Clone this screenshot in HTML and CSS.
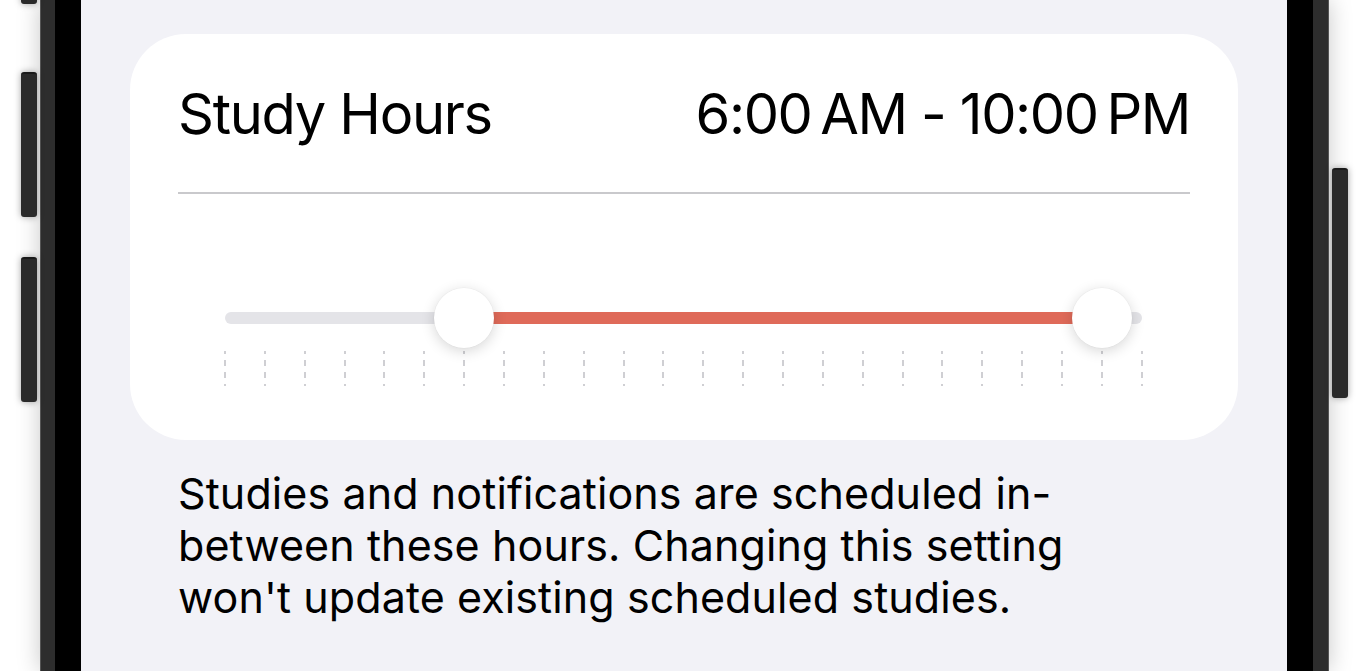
FILE: index.html
```html
<!DOCTYPE html>
<html lang="en">
<head>
<meta charset="utf-8">
<title>Study Hours</title>
<link rel="stylesheet" href="styles.css">
</head>
<body>
<div class="device">
  <span class="side-btn btn-l1"></span>
  <span class="side-btn btn-l2"></span>
  <span class="side-btn btn-l3"></span>
  <span class="side-btn btn-r1"></span>
  <div class="bezel">
    <main class="screen">
      <section class="card">
        <div class="card-head">
          <span class="title">Study Hours</span>
          <span class="range">6:00&#8239;AM - 10:00&#8239;PM</span>
        </div>
        <div class="divider"></div>
        <div class="slider">
          <div class="track">
            <div class="track-fill" style="left: 26.087%; width: 69.565%;"></div>
            <div class="thumb" style="left: 26.087%;"></div>
            <div class="thumb" style="left: 95.652%;"></div>
          </div>
          <div class="ticks">
            <i></i><i></i><i></i><i></i><i></i><i></i><i></i><i></i>
            <i></i><i></i><i></i><i></i><i></i><i></i><i></i><i></i>
            <i></i><i></i><i></i><i></i><i></i><i></i><i></i><i></i>
          </div>
        </div>
      </section>
      <p class="footnote">Studies and notifications are scheduled in-<br>between these hours. Changing this setting<br>won't update existing scheduled studies.</p>
    </main>
  </div>
</div>
</body>
</html>
```

FILE: styles.css
```css
* { box-sizing: border-box; }

html, body {
  margin: 0;
  height: 671px;
  overflow: hidden;
  background: #ffffff;
  font-family: Inter, "Noto Sans", "Liberation Sans", sans-serif;
  color: #000;
}

.device {
  position: relative;
  margin-left: 40px;
  width: 1289px;
  height: 671px;
  background: #2d2d2d;
  padding: 0 15px 0 14px;
  box-shadow: 0 0 22px rgba(0, 0, 0, 0.22);
  border-left: 1px solid #555;
  border-right: 1px solid #555;
}

.side-btn {
  position: absolute;
  width: 16px;
  background: #2a2a2a;
  border-radius: 3px;
  box-shadow: 0 0 7px rgba(0, 0, 0, 0.35);
  border-top: 2px solid #1a1a1a;
}
.btn-l1 { left: -20px; top: -40px; height: 44px; }
.btn-l2 { left: -20px; top: 72px; height: 145px; }
.btn-l3 { left: -20px; top: 257px; height: 145px; }
.btn-r1 { left: 1291px; top: 168px; height: 230px; }

.bezel {
  height: 100%;
  background: #000;
  padding: 0 26px 0 26px;
}

.screen {
  height: 100%;
  background: #f2f2f7;
  padding: 34px 49px 0 49px;
}

.card {
  background: #fff;
  border-radius: 56px;
  padding: 46px 48px 54px 48px;
}

.card-head {
  display: flex;
  justify-content: space-between;
  align-items: baseline;
  height: 68px;
  line-height: 68px;
  font-size: 56px;
}

.title {
  letter-spacing: -1.3px;
}

.range {
  letter-spacing: -1.4px;
}

.divider {
  margin-top: 44px;
  height: 2px;
  background: #c9c9cc;
}

.slider {
  padding: 0 48px 0 47px;
  margin-top: 94px;
}

.track {
  position: relative;
  height: 60px;
}
.track::before {
  content: "";
  position: absolute;
  left: 0;
  right: 0;
  top: 24px;
  height: 12px;
  border-radius: 6px;
  background: #e4e4e8;
}

.track-fill {
  position: absolute;
  top: 24px;
  height: 12px;
  background: #df6a59;
}

.thumb {
  position: absolute;
  top: 0;
  width: 60px;
  height: 60px;
  margin-left: -30px;
  border-radius: 50%;
  background: #fff;
  box-shadow: 0 3px 14px rgba(0, 0, 0, 0.16), 0 0 0 0.5px rgba(0, 0, 0, 0.04);
}

.ticks {
  display: flex;
  justify-content: space-between;
  margin: 3px -1px 0 -1px;
  height: 35px;
}
.ticks i {
  display: block;
  width: 2px;
  height: 35px;
  background-image: linear-gradient(#cfcfd3 0 6px, transparent 6px 12px);
  background-size: 2px 12px;
  background-position: 0 -3px;
  background-repeat: repeat-y;
}

.footnote {
  margin: 27px 0 0 0;
  padding-left: 48px;
  font-size: 43px;
  line-height: 52px;
  letter-spacing: 0.1px;
}
```
